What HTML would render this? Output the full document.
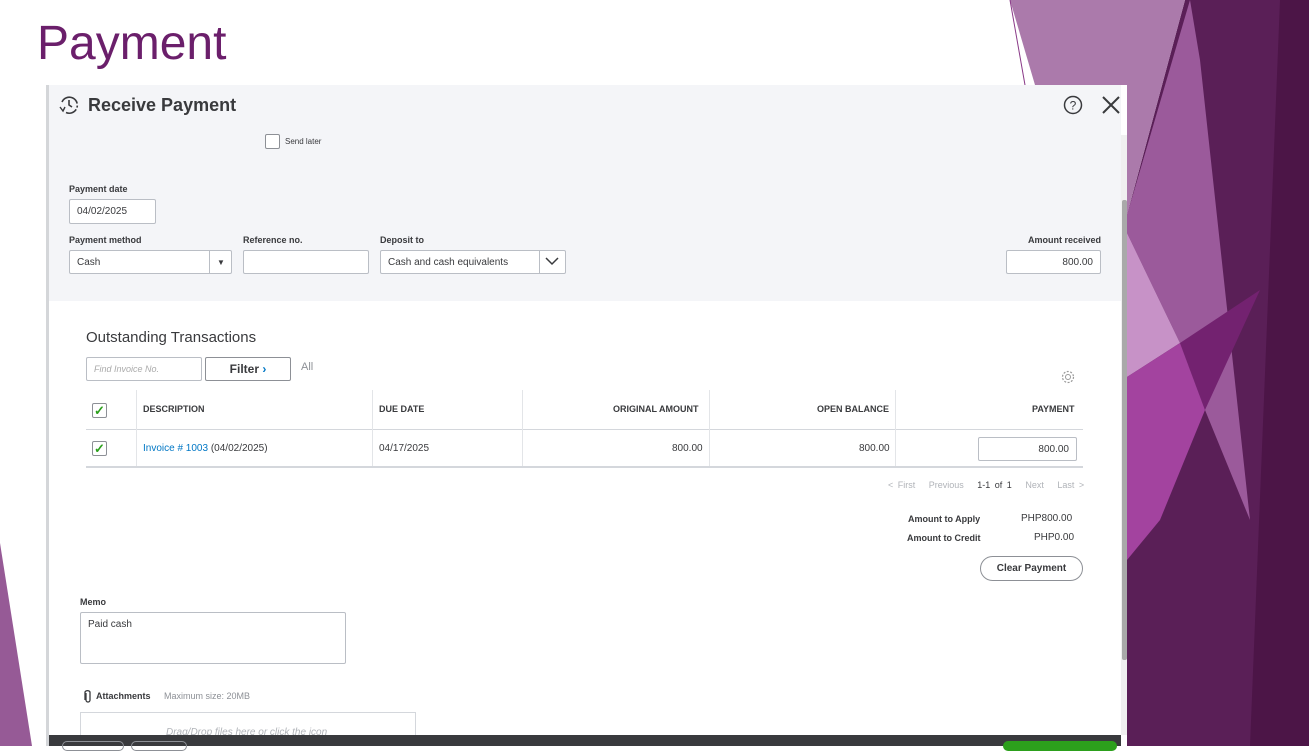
<!DOCTYPE html>
<html><head><style>
*{margin:0;padding:0;box-sizing:border-box}
body{width:1309px;height:746px;overflow:hidden;background:#fff;font-family:"Liberation Sans",sans-serif;position:relative;color:#393a3d}
.a{position:absolute}
.lbl{font-size:9px;font-weight:bold;color:#393a3d}
.inp{position:absolute;background:#fff;border:1px solid #babec5;border-radius:2px;font-size:10px;color:#393a3d;padding:0 7px;display:flex;align-items:center}
.th{position:absolute;font-size:9px;font-weight:bold;color:#393a3d;top:404px}
.td{position:absolute;font-size:10px;color:#393a3d;top:443px}
.cb{position:absolute;width:15px;height:15px;border:1px solid #8d9096;border-radius:2px;background:#fff}
</style></head><body>
<svg class="a" style="left:0;top:0" width="1309" height="746">
<polygon points="1185,0 1309,0 1309,746 1127,746 1127,215" fill="#5a1f57"/>
<polygon points="1280,0 1309,0 1309,746 1250,746" fill="#4c1547"/>
<polygon points="1010,0 1185,0 1127,215 1127,85 1035,85" fill="#ab7aab"/>
<polygon points="1190,0 1200,60 1250,520 1205,410 1180,343 1127,233 1127,215" fill="#9b5a9b"/>
<polygon points="1127,233 1180,343 1127,377" fill="#c792c7"/>
<polygon points="1127,377 1180,343 1205,410 1160,520 1127,560" fill="#a3439f"/>
<polygon points="1180,343 1260,290 1205,410" fill="#732270"/>
<line x1="1010" y1="0" x2="1025" y2="85" stroke="#8a3a88" stroke-width="1"/>
<polygon points="0,543 32,746 0,746" fill="#965a96"/>
</svg>
<div class="a" style="left:37px;top:16px;font-size:48px;color:#6b1f6b">Payment</div>

<div class="a" style="left:46px;top:85px;width:1081px;height:661px;background:#fff;border-left:3px solid #d4d6d9"></div>
<div class="a" style="left:49px;top:85px;width:1072px;height:216px;background:#f4f5f8"></div>
<div class="a" style="left:1121px;top:135px;width:6px;height:600px;background:#f0f0f0"></div>
<div class="a" style="left:1122px;top:200px;width:5px;height:460px;background:#a9a9a9;border-radius:2px"></div>

<svg class="a" style="left:58px;top:94px" width="22" height="22" viewBox="0 0 22 22"><path d="M4 8 A8 8 0 1 1 8 18.5" fill="none" stroke="#393a3d" stroke-width="1.6" stroke-dasharray="20 2 2 2"/><path d="M11 6v5l3 2" fill="none" stroke="#393a3d" stroke-width="1.6"/><path d="M2 13l3 4 2-4" fill="none" stroke="#393a3d" stroke-width="1.4"/></svg>
<div class="a" style="left:88px;top:95px;font-size:18px;font-weight:bold;color:#393a3d">Receive Payment</div>
<svg class="a" style="left:1063px;top:95px" width="20" height="20"><circle cx="10" cy="10" r="8.5" fill="none" stroke="#393a3d" stroke-width="1.5"/><text x="10" y="14.5" font-size="12" text-anchor="middle" fill="#393a3d" font-family="Liberation Sans">?</text></svg>
<svg class="a" style="left:1101px;top:95px" width="20" height="20"><path d="M2 2L18 18M18 2L2 18" stroke="#393a3d" stroke-width="2"/></svg>

<div class="cb" style="left:265px;top:134px"></div>
<div class="a" style="left:285px;top:137px;font-size:8px;color:#393a3d">Send later</div>

<div class="a lbl" style="left:69px;top:184px">Payment date</div>
<div class="inp" style="left:69px;top:199px;width:87px;height:25px">04/02/2025</div>
<div class="a lbl" style="left:69px;top:235px">Payment method</div>
<div class="inp" style="left:69px;top:250px;width:163px;height:24px">Cash</div>
<div class="a" style="left:209px;top:250px;width:1px;height:24px;background:#babec5"></div>
<div class="a" style="left:217px;top:258px;font-size:8px">▼</div>
<div class="a lbl" style="left:243px;top:235px">Reference no.</div>
<div class="inp" style="left:243px;top:250px;width:126px;height:24px"></div>
<div class="a lbl" style="left:380px;top:235px">Deposit to</div>
<div class="inp" style="left:380px;top:250px;width:186px;height:24px">Cash and cash equivalents</div>
<div class="a" style="left:539px;top:250px;width:1px;height:24px;background:#babec5"></div>
<svg class="a" style="left:545px;top:256px" width="14" height="10"><path d="M1 2l6 6 6-6" fill="none" stroke="#393a3d" stroke-width="1.5"/></svg>
<div class="a lbl" style="left:1028px;top:235px">Amount received</div>
<div class="inp" style="left:1006px;top:250px;width:95px;height:24px;justify-content:flex-end">800.00</div>

<div class="a" style="left:86px;top:329px;font-size:15px;color:#393a3d">Outstanding Transactions</div>
<div class="inp" style="left:86px;top:357px;width:116px;height:24px;font-style:italic;color:#aaa;font-size:9px">Find Invoice No.</div>
<div class="a" style="left:205px;top:357px;width:86px;height:24px;border:1px solid #8d9096;border-radius:2px;background:#fff;font-size:12px;font-weight:bold;text-align:center;line-height:22px">Filter <span style="color:#0077c5">›</span></div>
<div class="a" style="left:301px;top:361px;font-size:11px;color:#8d9096">All</div>
<svg class="a" style="left:1060px;top:369px" width="16" height="16"><circle cx="8" cy="8" r="5.5" fill="none" stroke="#999" stroke-width="1.2" stroke-dasharray="2 1.5"/><circle cx="8" cy="8" r="2.5" fill="none" stroke="#999" stroke-width="1"/></svg>

<div class="a" style="left:86px;top:429px;width:997px;height:1px;background:#d4d7dc"></div>
<div class="a" style="left:86px;top:466px;width:997px;height:2px;background:#d4d7dc"></div>
<div class="a" style="left:136px;top:390px;width:1px;height:76px;background:#e3e5e8"></div>
<div class="a" style="left:372px;top:390px;width:1px;height:76px;background:#e3e5e8"></div>
<div class="a" style="left:522px;top:390px;width:1px;height:76px;background:#e3e5e8"></div>
<div class="a" style="left:709px;top:390px;width:1px;height:76px;background:#e3e5e8"></div>
<div class="a" style="left:895px;top:390px;width:1px;height:76px;background:#e3e5e8"></div>
<div class="cb" style="left:92px;top:403px;color:#2ca01c;font-size:13px;line-height:13px;text-align:center;font-weight:bold">✓</div>
<div class="cb" style="left:92px;top:441px;color:#2ca01c;font-size:13px;line-height:13px;text-align:center;font-weight:bold">✓</div>
<div class="th" style="left:143px">DESCRIPTION</div>
<div class="th" style="left:379px">DUE DATE</div>
<div class="th" style="left:613px">ORIGINAL AMOUNT</div>
<div class="th" style="left:817px">OPEN BALANCE</div>
<div class="th" style="left:1032px">PAYMENT</div>
<div class="td" style="left:143px"><span style="color:#0077c5">Invoice # 1003</span> (04/02/2025)</div>
<div class="td" style="left:379px">04/17/2025</div>
<div class="td" style="left:672px">800.00</div>
<div class="td" style="left:859px">800.00</div>
<div class="inp" style="left:978px;top:437px;width:99px;height:24px;justify-content:flex-end">800.00</div>

<div class="a" style="left:888px;top:480px;font-size:9px;color:#b0b3b8;word-spacing:2px">&lt; First &nbsp; Previous &nbsp; <b style="color:#393a3d;font-weight:normal">1-1 of 1</b> &nbsp; Next &nbsp; Last &gt;</div>
<div class="a lbl" style="left:908px;top:514px">Amount to Apply</div>
<div class="a lbl" style="left:907px;top:533px">Amount to Credit</div>
<div class="a" style="left:1021px;top:513px;font-size:10px">PHP800.00</div>
<div class="a" style="left:1034px;top:532px;font-size:10px">PHP0.00</div>
<div class="a" style="left:980px;top:556px;width:103px;height:25px;border:1px solid #8d9096;border-radius:13px;font-size:10px;font-weight:bold;text-align:center;line-height:23px">Clear Payment</div>

<div class="a lbl" style="left:80px;top:597px">Memo</div>
<div class="inp" style="left:80px;top:612px;width:266px;height:52px;align-items:flex-start;padding-top:6px">Paid cash</div>
<svg class="a" style="left:83px;top:689px" width="10" height="14"><path d="M3 4v7a2 2 0 0 0 4 0V3a3 3 0 0 0-5 0v8" fill="none" stroke="#393a3d" stroke-width="1.3"/></svg>
<div class="a lbl" style="left:96px;top:691px">Attachments</div>
<div class="a" style="left:164px;top:691px;font-size:9px;color:#8d9096">Maximum size: 20MB</div>
<div class="a" style="left:80px;top:712px;width:336px;height:30px;border:1px solid #d4d7dc"></div>
<div class="a" style="left:166px;top:727px;font-size:10px;font-style:italic;color:#b0b3b8">Drag/Drop files here or click the icon</div>
<div class="a" style="left:49px;top:735px;width:1072px;height:11px;background:#393a3d"></div>
<div class="a" style="left:62px;top:741px;width:62px;height:10px;border:1px solid #8d9096;border-radius:8px"></div>
<div class="a" style="left:131px;top:741px;width:56px;height:10px;border:1px solid #8d9096;border-radius:8px"></div>
<div class="a" style="left:1003px;top:741px;width:114px;height:10px;background:#2ca01c;border-radius:8px"></div>
</body></html>
